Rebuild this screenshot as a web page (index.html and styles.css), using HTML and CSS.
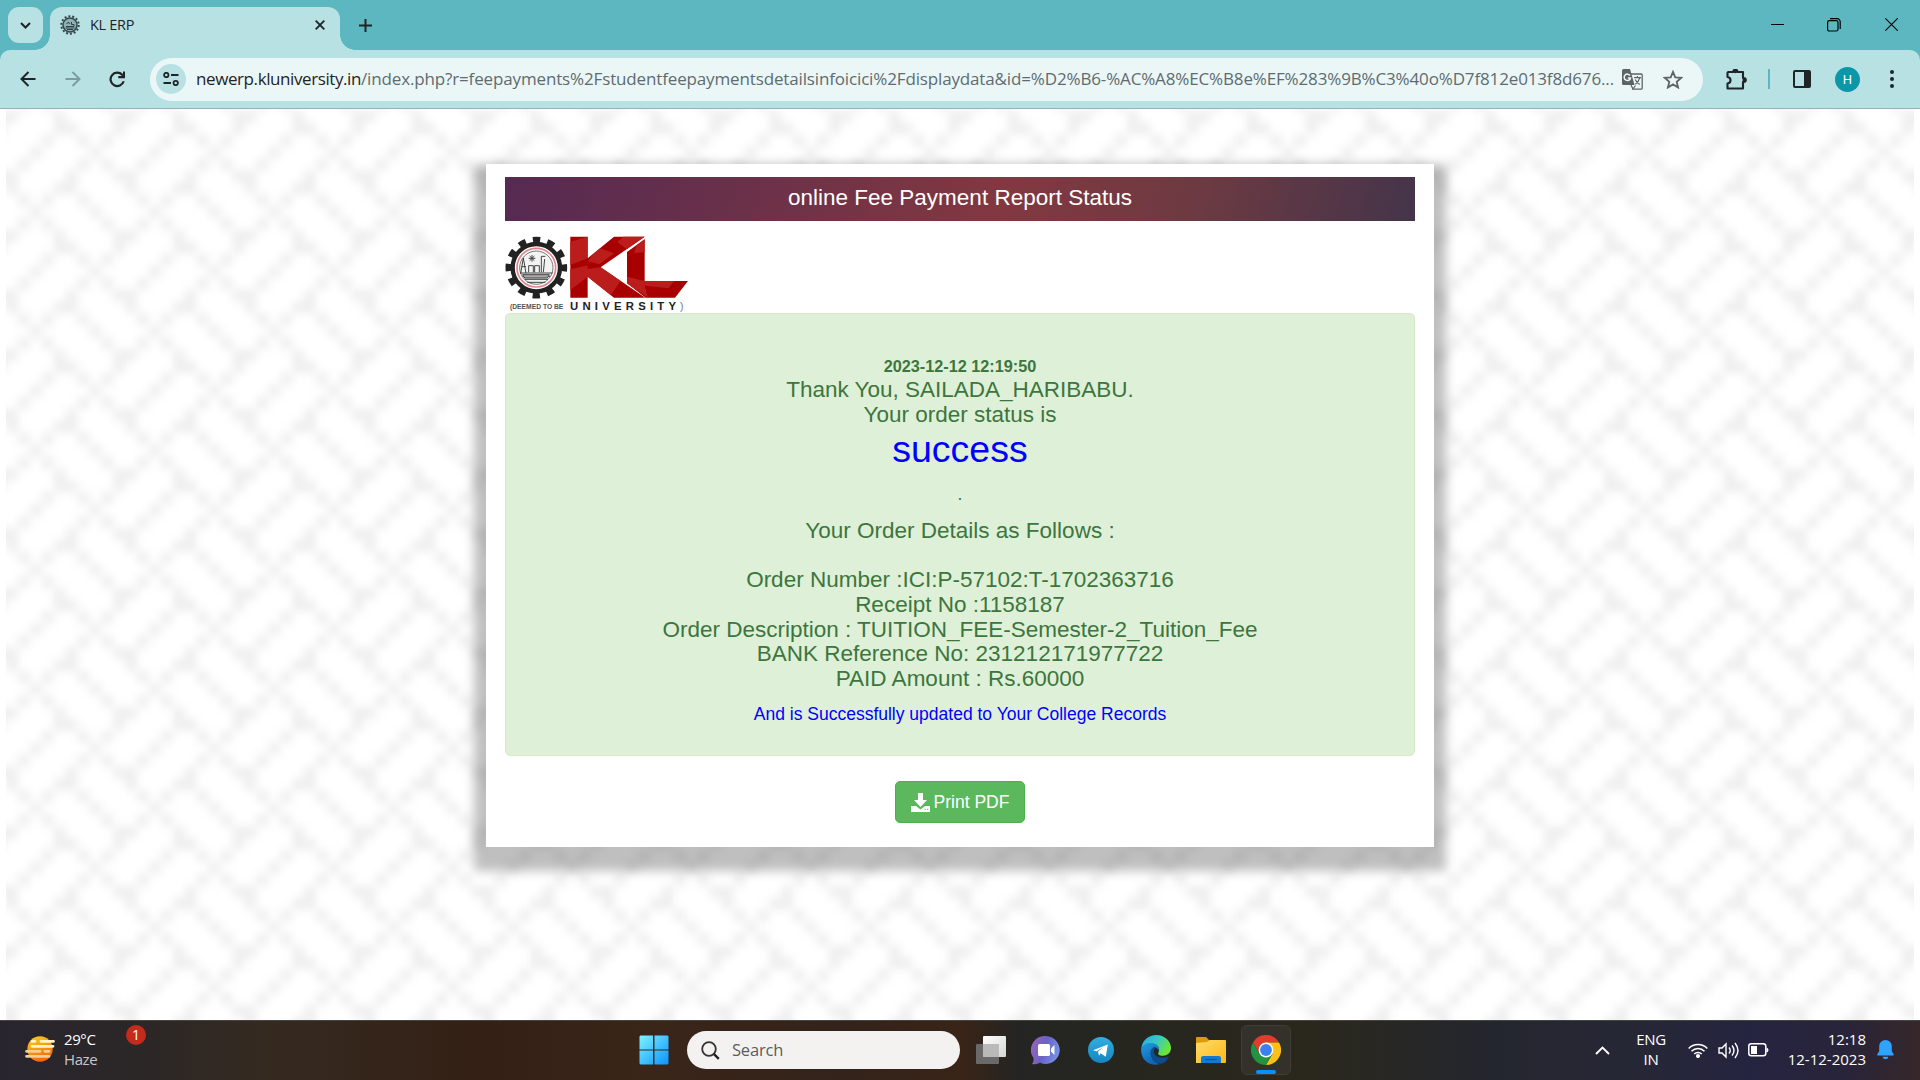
FILE: index.html
```html
<!DOCTYPE html>
<html lang="en">
<head>
<meta charset="utf-8">
<title>KL ERP</title>
<link rel="stylesheet" href="styles.css">
</head>
<body>
<div class="screen">
  <header class="tabstrip">
    <div class="tab-search"><svg width="11" height="7" viewBox="0 0 11 7"><path d="M1 1l4.500 4.500L10 1" fill="none" stroke="#1f2426" stroke-width="2"/></svg></div>
    <div class="tab">
      <svg class="favicon" width="20" height="20" viewBox="0 0 20 20"><circle cx="10" cy="10" r="8.700" fill="none" stroke="#34484c" stroke-width="2" stroke-dasharray="2 1.904"/><circle cx="10" cy="10" r="7" fill="#8fb0b4" stroke="#34484c" stroke-width="1.500"/><path d="M5.500 13h9M6 11.500h8V9.500h-2.500V7M6.500 9l2-2 1 2M7 14.500h6" fill="none" stroke="#304448"/></svg>
      <span class="tab-title">KL ERP</span>
      <svg class="tab-close" width="10" height="10" viewBox="0 0 10 10"><path d="M.7.7l8.600 8.600M9.300.7L.7 9.300" stroke="#1f2426" stroke-width="1.900"/></svg>
    </div>
    <svg class="new-tab" width="13" height="13" viewBox="0 0 13 13"><path d="M6.500 0v13M0 6.500h13" stroke="#1f2426" stroke-width="2"/></svg>
    <div class="window-controls">
      <svg width="13" height="13" viewBox="0 0 13 13"><path d="M0 6.500h13" stroke="#000"/></svg>
      <svg width="14" height="14" viewBox="0 0 14 14" fill="none" stroke="#000" stroke-width="1.200"><rect x=".6" y="2.600" width="10.400" height="10.400" rx="1.800"/><path d="M3 .7h7.200a3 3 0 0 1 3 3V11"/></svg>
      <svg width="13" height="13" viewBox="0 0 13 13"><path d="M.3.3l12.400 12.400M12.700.3L.3 12.700" stroke="#000" stroke-width="1.100"/></svg>
    </div>
  </header>
  <div class="toolbar-wrap">
    <div class="toolbar">
      <svg class="nav-back" width="16" height="16" viewBox="0 0 16 16" fill="none" stroke="#1f2426" stroke-width="2"><path d="M15.500 8H2M8.500 1L1.500 8l7 7"/></svg>
      <svg class="nav-fwd" width="16" height="16" viewBox="0 0 16 16" fill="none" stroke="#7c9ca0" stroke-width="2"><path d="M.5 8H14M7.500 1l7 7-7 7"/></svg>
      <svg class="nav-reload" width="17" height="17" viewBox="0 0 17 17"><path d="M14.700 10.300A6.700 6.700 0 1 1 13.200 3.800L15 5.600" fill="none" stroke="#1f2426" stroke-width="2.200"/><path d="M16 .5v6.700H9.300V5H14V.5z" fill="#1f2426"/></svg>
      <div class="omnibox">
        <div class="site-info"><svg width="16" height="14" viewBox="0 0 16 14" fill="none" stroke="#1f2426" stroke-width="1.800"><circle cx="3.300" cy="3" r="2.200"/><path d="M8 3h7.500M.5 11H8"/><circle cx="12.700" cy="11" r="2.200"/></svg></div>
        <div class="url"><span class="host">newerp.kluniversity.in</span><span class="path">/index.php?r=feepayments%2Fstudentfeepaymentsdetailsinfoicici%2Fdisplaydata&amp;id=%D2%B6-%AC%A8%EC%B8e%EF%283%9B%C3%40o%D7f812e013f8d676...</span></div>
        <svg class="translate" width="21" height="21" viewBox="0 0 21 21"><path d="M9 5h10.200q1 0 1 1v13.200q0 1-1 1H11L9 16" fill="none" stroke="#5f6368" stroke-width="1.300"/><path d="M1.500 0H8l4.500 16h-11Q0 16 0 14.500v-13Q0 0 1.500 0z" fill="#5f6368"/><path d="M8 6.500A3.200 3.200 0 1 0 8.500 9H5.800" fill="none" stroke="#ebf7f7" stroke-width="1.500"/><path d="M12 8.700h7M15.400 7v1.700M17.800 8.700q-1 4-4.500 6.500M13.200 10.500q1.500 3 4.500 5M10.500 20.500l3-4" fill="none" stroke="#5f6368" stroke-width="1.200"/></svg>
        <svg class="star" width="20" height="19" viewBox="0 0 20 19"><path d="M10 1.800l2.300 5.500 5.900.5-4.500 3.900 1.400 5.800L10 14.400l-5.100 3.100 1.400-5.800-4.500-3.900 5.900-.5z" fill="none" stroke="#5f6368" stroke-width="1.800"/></svg>
      </div>
      <svg class="puzzle" width="21" height="21" viewBox="0 0 21 21"><path d="M2.500 3h4.800V2.600a2 2 0 0 1 4 0V3H17v6h.7a2 2 0 0 1 0 4H17v6.500H1.500V14.500q3-.5 3-3.300T1.500 8V4q0-1 1-1z" fill="none" stroke="#1f2426" stroke-width="2.100" stroke-linejoin="round"/><circle cx="9.300" cy="2.300" r="2" fill="#1f2426"/><circle cx="18.500" cy="11" r="2" fill="#1f2426"/></svg>
      <div class="divider"></div>
      <svg class="panel" width="18" height="18" viewBox="0 0 18 18"><rect x="1" y="1" width="16" height="16" rx="1" fill="none" stroke="#1f2426" stroke-width="2"/><path d="M11 1h6v16h-6z" fill="#1f2426"/></svg>
      <div class="avatar">H</div>
      <svg class="menu" width="4" height="18" viewBox="0 0 4 18" fill="#1f2426"><circle cx="2" cy="2" r="2"/><circle cx="2" cy="9" r="2"/><circle cx="2" cy="16" r="2"/></svg>
    </div>
  </div>

  <main class="page">
    <svg class="weave" width="1908" height="911">
      <defs>
        <pattern id="weave" width="10" height="10" patternUnits="userSpaceOnUse" patternTransform="translate(0 1.700) scale(11.925)">
          <path fill="#efefef" d="M0 0h1v1H0zM4 0h1v2H4zM9 0h1v2H9zM5 1h1v1H5zM3 2h1v1H3zM6 2h1v1H6zM8 2h1v1H8zM2 3h1v1H2zM7 3h1v1H7zM1 4h1v1H1zM6 4h1v1H6zM8 4h1v1H8zM0 5h1v2H0zM5 5h1v2H5zM9 5h1v1H9zM4 6h1v1H4zM1 7h1v1H1zM3 7h1v1H3zM6 7h1v1H6zM2 8h1v1H2zM7 8h1v1H7zM1 9h1v1H1zM3 9h1v1H3zM8 9h1v1H8z"/>
        </pattern>
        <filter id="soft" x="0" y="0" width="1" height="1" color-interpolation-filters="sRGB"><feGaussianBlur stdDeviation="4"/></filter>
      </defs>
      <rect x="-30" y="-30" width="1968" height="971" fill="url(#weave)" filter="url(#soft)"/>
    </svg>
    <section class="card">
      <h1 class="card-title">online Fee Payment Report Status</h1>
      <svg class="logo" width="184" height="77" viewBox="75 258 552 231">
        <circle cx="169" cy="353" r="84" fill="none" stroke="#222" stroke-width="17" stroke-dasharray="22 21.980" stroke-dashoffset="11"/>
        <circle cx="169" cy="353" r="71" fill="#fff" stroke="#222" stroke-width="13"/>
        <circle cx="169" cy="353" r="58" fill="none" stroke="#e0868b" stroke-width="5"/>
        <circle cx="169" cy="353" r="50" fill="#f3f3f3" stroke="#777" stroke-width="3"/>
        <g fill="none" stroke="#444" stroke-width="3"><path d="M122 370l8-46 8 46M124 350h14M146 367v-20h14v20M164 367v-20h14v20M184 367v-48h12M190 367l4-40M120 369h98M128 379h82M134 388h70M142 397h54M146 325h20M156 315v20M149 318l14 14M163 318l-14 14"/><path d="M128 374h80l-6 10h-68z" fill="#aaa"/></g>
        <path fill="#a80000" d="M271 260h52v65l79-65h92L362 352l134 91h-94l-79-63v63h-52z"/>
        <path fill="#bb1c1c" d="M271 275l52-15v65l-52 20zM340 312l20-17 42 15-44 33-35-10zM271 358l52-12v34l-52 40zM358 352l4 0 60 41-30 42-69-55 0-23zM430 260h64l-54 38-28-22z"/>
        <path fill="#a80000" d="M441 306l53-38v125h130l-39 50h-88l-56-43z"/>
        <path fill="#bb1c1c" d="M470 285l24-17v39l-32 2zM441 380l53 13h88l-16 22-72-8 10 36-63-43z"/>
        <text class="logo-small" x="90" y="476" textLength="160" lengthAdjust="spacingAndGlyphs">(DEEMED TO BE</text>
        <text class="logo-large" x="270" y="481" textLength="318">UNIVERSITY</text>
        <text class="logo-paren" x="600" y="479">)</text>
      </svg>
      <div class="alert">
        <p class="stamp">2023-12-12 12:19:50</p>
        <p class="line">Thank You, SAILADA_HARIBABU.</p>
        <p class="line">Your order status is</p>
        <p class="status">success</p>
        <p class="dot">.</p>
        <p class="line">Your Order Details as Follows :</p>
        <div class="details">
          <p class="line">Order Number :ICI:P-57102:T-1702363716</p>
          <p class="line">Receipt No :1158187</p>
          <p class="line">Order Description : TUITION_FEE-Semester-2_Tuition_Fee</p>
          <p class="line">BANK Reference No: 231212171977722</p>
          <p class="line">PAID Amount : Rs.60000</p>
        </div>
        <p class="note">And is Successfully updated to Your College Records</p>
      </div>
      <button class="print"><svg width="19" height="19" viewBox="0 0 19 19"><path d="M7 0h5v7h4L9.500 14 3 7h4zM0 13h5l4.500 3.500L14 13h5v6H0z" fill="#fff"/><path d="M13.500 16.300h1.300M16 16.300h1.300" stroke="#5cb85c" stroke-width="1"/></svg><span>Print PDF</span></button>
    </section>
  </main>

  <footer class="taskbar">
    <div class="weather">
      <svg width="30" height="26" viewBox="0 0 30 26"><defs><linearGradient id="sun" x2=".4" y2="1"><stop stop-color="#ffd21e"/><stop offset="1" stop-color="#f26a0c"/></linearGradient></defs><circle cx="15" cy="13" r="12.700" fill="url(#sun)"/><g stroke-linecap="round" stroke-width="2.800"><path d="M7 5.300h3M16 5.300h12.500M7 10.300h21" stroke="#fff3c9"/><path d="M1.500 15.300H15M20 15.300h4M1.500 20.300H24" stroke="#ecd09a"/></g></svg>
      <div class="weather-text"><span>29°C</span><span class="dim">Haze</span></div>
      <span class="count">1</span>
    </div>
    <div class="apps">
      <svg class="start" width="30" height="30" viewBox="0 0 30 30"><defs><linearGradient id="win" x2="1" y2="1"><stop stop-color="#7df3ff"/><stop offset="1" stop-color="#0a93ff"/></linearGradient></defs><path fill="url(#win)" d="M1.500.5H14v14H.5v-13zM15.500.5h13l1 1v13h-14zM.5 15.500H14v14H1.500l-1-1zM15.500 15.500h14v13l-1 1h-13z"/></svg>
      <div class="search"><svg width="19" height="19" viewBox="0 0 19 19"><circle cx="8" cy="8" r="6.800" fill="none" stroke="#333" stroke-width="1.800"/><path d="M12.800 12.800l5 5" stroke="#222" stroke-width="2.400"/></svg><span>Search</span></div>
      <svg class="taskview" width="30" height="28" viewBox="0 0 30 28"><defs><linearGradient id="tv" x2="1" y2="1"><stop stop-color="#fff"/><stop offset="1" stop-color="#d5d5d5"/></linearGradient></defs><rect y="8" width="23" height="20" rx="1" fill="#696969"/><rect x="7" width="23" height="21" rx="1" fill="url(#tv)"/><path d="M7 8h16v13H7z" fill="#b9b9b9"/></svg>
      <svg class="chat" width="30" height="30" viewBox="0 0 30 30"><defs><linearGradient id="ch" x1="0" y1=".2" x2="1" y2=".5"><stop stop-color="#9a63b5"/><stop offset=".5" stop-color="#6b62c8"/><stop offset="1" stop-color="#7592e8"/></linearGradient></defs><path d="M15 1a14 14 0 1 1-6 26.800Q4 30 1 29q2-2 1.500-6A14 14 0 0 1 15 1z" fill="url(#ch)"/><rect x="7" y="9" width="12" height="12" rx="1.500" fill="#fff"/><path d="M20 13.500l3.500-3.500v10L20 16.500z" fill="#fff"/></svg>
      <svg class="telegram" width="26" height="26" viewBox="0 0 26 26"><defs><linearGradient id="tg" x2="0" y2="1"><stop stop-color="#32aee0"/><stop offset="1" stop-color="#1585c0"/></linearGradient></defs><circle cx="13" cy="13" r="13" fill="url(#tg)"/><path d="M5 13.300L19.800 7.600l-2 12.200-5.200-3.600-1.600 2.600-1-4.200 6-5-7.200 4.600z" fill="#fff"/></svg>
      <svg class="edge" width="30" height="30" viewBox="0 0 30 30"><defs><linearGradient id="e1" x2="1" y2=".5"><stop stop-color="#28a7e5"/><stop offset=".5" stop-color="#35c7c8"/><stop offset="1" stop-color="#6be536"/></linearGradient><linearGradient id="e2" x2=".5" y2="1"><stop stop-color="#1e9fe0"/><stop offset="1" stop-color="#0f62b4"/></linearGradient></defs><path d="M.3 13C1.500 5 8 0 15 0c9 0 15 6.500 15 13 0 5-4 7.700-8 7.700-4 0-5.500-1.500-4.500-3.200C19.500 13 16 9 11 9 6 9 2 11 .3 13z" fill="url(#e1)"/><path d="M.2 13C2 9.500 6.500 7.500 11 8c5 .4 8 4 7 8-2-5-7-4-8 1-1 6 4 11 9 12C9 32-1 25 .2 13z" fill="url(#e2)"/><path d="M13.500 11.800c-5 2-5 8-2 12 4 5 12 3 16-1.500.8-.5.5-1-.5-.8-7 3-14 0-14-5 0-2 1-3.500 2.500-4.200zM11 24c3 4 8 5 10 4.600 3-1.100 5-3.100 6-5.100-5 3-12 3-16 .5z" fill="#0c4c90"/></svg>
      <svg class="folder" width="30" height="26" viewBox="0 0 30 26"><defs><linearGradient id="fo" x2="1" y2="1"><stop stop-color="#ffdc6b"/><stop offset="1" stop-color="#fdb813"/></linearGradient></defs><path d="M0 1q0-1 1-1h9l3 3v4H0z" fill="#dd9b0b"/><path d="M0 6l11-1 2.500-2H29q1 0 1 1v21q0 1-1 1H0z" fill="url(#fo)"/><path d="M5 26v-5q0-2 2-2h16q2 0 2 2v5z" fill="#127bd1"/><path d="M9 22.500h12" stroke="#0b5394" stroke-width="1.200"/></svg>
      <div class="active-app"><svg width="30" height="30" viewBox="-15 -15 30 30"><path fill="#e33b2e" d="M-13-7.500A15 15 0 0 1 13-7.500H0L-6.500 3.700z"/><path fill="#fbc116" d="M13-7.500A15 15 0 0 1 0 15L6.500 3.700 0-7.500z"/><path fill="#229342" d="M0 15A15 15 0 0 1-13-7.500L-6.500 3.700h13z"/><circle r="7.400" fill="#fff"/><circle r="5.900" fill="#3a80ee"/></svg><i class="underline"></i></div>
    </div>
    <div class="tray">
      <svg class="chevron" width="15" height="9" viewBox="0 0 15 9"><path d="M1 8l6.500-6.500L14 8" fill="none" stroke="#fff" stroke-width="1.900"/></svg>
      <div class="lang"><span>ENG</span><span>IN</span></div>
      <svg class="wifi" width="20" height="15" viewBox="0 0 20 15" fill="none" stroke="#fff" stroke-width="1.500"><path d="M.7 5.500a13 13 0 0 1 18.600 0M3.500 8.300a9 9 0 0 1 13 0M6.200 11a5.500 5.500 0 0 1 7.600 0"/><circle cx="10" cy="13" r="1.300" fill="#fff"/></svg>
      <svg class="volume" width="21" height="17" viewBox="0 0 21 17" fill="none" stroke="#fff" stroke-width="1.400"><path d="M1 6h3l4-4v13l-4-4H1zM11 5.500q2.500 3 0 6M14 3.500q4 5 0 10M17 1q6 7.500 0 15"/></svg>
      <svg class="battery" width="21" height="14" viewBox="0 0 21 14"><rect x=".8" y=".8" width="17" height="12" rx="2.500" fill="none" stroke="#fff" stroke-width="1.500"/><path d="M3 3h6v8H3zM18.500 4.500q2 .5 2 2.500t-2 2.500z" fill="#fff"/></svg>
      <div class="clock"><span>12:18</span><span>12-12-2023</span></div>
      <svg class="bell" width="17" height="20" viewBox="0 0 17 20"><path d="M8.500 0a6.300 6.300 0 0 1 6.300 6.300v5l2 3.200q.2 1-.8 1H1q-1 0-.8-1l2-3.200v-5A6.300 6.300 0 0 1 8.500 0zM5.500 16.800h6q-.7 2.500-3 2.500t-3-2.500z" fill="#2ea3ff"/></svg>
    </div>
  </footer>
</div>
</body>
</html>
```
FILE: styles.css
```css
* { box-sizing: border-box; }
body { margin: 0; background: #fff; overflow: hidden; }
svg { display: block; flex: none; }
p, h1 { margin: 0; font-weight: 400; }

.screen { width: 1920px; height: 1080px; display: flex; flex-direction: column; font-family: "Open Sans", "Noto Sans", sans-serif; }

/* Browser frame */
.tabstrip { height: 50px; flex: none; background: #5cb7c1; display: flex; align-items: flex-start; padding: 7px 22px 0 8px; }
.tab-search { width: 35px; height: 36px; border-radius: 11px; background: #b8e1e4; display: flex; align-items: center; justify-content: center; margin-right: 7px; }
.tab { position: relative; width: 290px; height: 43px; border-radius: 12px 12px 0 0; background: #b8e1e4; display: flex; align-items: center; padding: 0 15px 7px 10px; }
.tab::before, .tab::after { content: ""; position: absolute; bottom: 0; width: 15px; height: 15px; }
.tab::before { left: -15px; background: radial-gradient(circle at 0 0, transparent 14.500px, #b8e1e4 15px); }
.tab::after { right: -15px; background: radial-gradient(circle at 100% 0, transparent 14.500px, #b8e1e4 15px); }
.tab-title { margin-left: 10px; flex: 1; font-size: 14.500px; line-height: 20px; letter-spacing: -.3px; color: #1f2426; }
.new-tab { margin: 12px 0 0 19px; }
.window-controls { margin-left: auto; margin-top: 11px; display: flex; gap: 44px 43px; }
.window-controls svg:last-child { margin-left: 1px; }

.toolbar-wrap { background: #5cb7c1; height: 59px; flex: none; }
.toolbar { height: 59px; background: #b8e1e4; border-bottom: 1px solid #8eb3b9; border-radius: 10px 10px 0 0; display: flex; align-items: center; padding: 0 0 0 20px; }
.nav-fwd { margin-left: 29px; }
.nav-reload { margin-left: 28px; }
.omnibox { flex: none; margin-left: 24px; width: 1553px; height: 43px; border-radius: 22px; background: #ebf7f7; display: flex; align-items: center; padding: 0 20px 0 6px; }
.site-info { width: 30px; height: 30px; flex: none; border-radius: 50%; background: #b8e1e4; display: flex; align-items: center; justify-content: center; }
.url { margin-left: 10px; width: 1426px; white-space: nowrap; font-size: 17px; line-height: 24px; flex: none; }
.host { color: #1f2426; letter-spacing: -.41px; }
.path { color: #5f6b70; letter-spacing: -.145px; }
.star { margin-left: 20px; }
.puzzle { margin-left: 23px; }
.divider { flex: none; width: 2px; height: 20px; background: #5cb7c1; margin: 0 23px 0 21px; }
.avatar { flex: none; width: 25px; height: 25px; border-radius: 50%; background: #0b97a7; color: #fff; font: 13px/25px Roboto, sans-serif; text-align: center; margin: 0 30px 0 24px; }

/* Receipt page */
.page { position: relative; flex: 1; overflow: hidden; display: flex; justify-content: center; align-items: flex-start; padding-top: 55px; font-family: "Liberation Sans", Arial, sans-serif; }
.weave { position: absolute; left: 6px; top: 0; }
.card { position: relative; width: 948px; height: 683px; background: #fff; padding: 13px 19px; box-shadow: 0 12px 10px 12px rgba(0, 0, 0, .25); display: flex; flex-direction: column; }
.card-title { height: 44px; flex: none; line-height: 42px; font-size: 22.500px; color: #fff; text-align: center; background: linear-gradient(105deg, #552a52, #823840 55%, #6c3a42 76%, #44344a); }
.logo { margin-top: 15px; }
.logo-small { font-size: 19px; font-weight: 700; fill: #555; }
.logo-large { font-size: 34px; font-weight: 700; fill: #222; }
.logo-paren { font-size: 31px; fill: #777; }
.alert { height: 443px; flex: none; background: #dff0d8; border: 1px solid #d6e9c6; border-radius: 5px; color: #3c763d; text-align: center; padding-top: 40px; }
.stamp { font-size: 16.250px; font-weight: 700; line-height: 24px; }
.line { font-size: 22.500px; line-height: 24.750px; }
.status { font-size: 37.500px; line-height: 41.250px; color: #00f; margin-top: 1px; }
.dot { font-size: 17.500px; line-height: 25px; margin: 12.500px 0 11.300px; }
.details { margin-top: 24.750px; }
.note { font-size: 17.500px; line-height: 19.250px; color: #00f; margin-top: 13px; }
.print { align-self: center; margin-top: 25px; width: 130px; height: 42px; flex: none; border: 1px solid #4cae4c; border-radius: 5px; background: #5cb85c; color: #fff; font: 17.500px "Liberation Sans", Arial, sans-serif; display: flex; align-items: center; justify-content: center; gap: 4px; padding: 0; white-space: nowrap; }

/* Taskbar */
.taskbar { height: 60px; flex: none; display: flex; align-items: center; color: #fff; font-size: 15px; line-height: 20px; padding-bottom: 1px; border-top: 1px solid #45443f; background: linear-gradient(90deg, #28252f 0, #2b2727 7%, #352a20 14%, #342015 25%, #3a2519 34%, #33231a 44%, #3a2418 50%, #242522 53%, #2a281c 68%, #24262f 78%, #262735 85%, #252440 91%, #28243a 96%, #36272a 100%); }
.weather { width: 639px; height: 58px; display: flex; padding-left: 25px; align-items: center; flex: none; }
.weather > svg { margin-bottom: 2px; }
.weather-text { display: flex; flex-direction: column; width: 62px; margin: 0 0 3px 9px; letter-spacing: -.4px; }
.dim { color: #c8c6c8; }
.count { width: 20px; height: 20px; border-radius: 50%; background: #c42b1c; text-align: center; font-size: 14px; line-height: 20px; margin-bottom: 30px; }
.apps { display: flex; align-items: center; flex: none; }
.search { width: 273px; height: 38px; margin: 0 16px 0 18px; border-radius: 19px; background: #f3f2f1; color: #5d5d5d; display: flex; align-items: center; gap: 12px; padding-left: 14px; font-size: 16.500px; letter-spacing: -.2px; }
.chat { margin-left: 25px; }
.telegram { margin-left: 27px; }
.edge { margin-left: 27px; }
.folder { margin-left: 25px; }
.active-app { position: relative; width: 50px; height: 50px; margin-left: 15px; border: 1px solid #3f3e36; border-radius: 6px; background: #33322a; display: flex; align-items: center; justify-content: center; }
.underline { position: absolute; left: 14px; bottom: 0; width: 20px; height: 4px; border-radius: 2px; background: #0a8fff; }
.tray { margin-left: auto; padding-right: 26px; display: flex; align-items: center; flex: none; }
.lang { width: 46px; text-align: center; margin: 0 0 2px 18px; display: flex; flex-direction: column; letter-spacing: -.3px; }
.wifi { margin-left: 14px; }
.volume { margin-left: 10px; }
.battery { margin-left: 9px; }
.clock { width: 97px; text-align: right; display: flex; flex-direction: column; margin-bottom: 3px; }
.bell { margin-left: 11px; }
```
